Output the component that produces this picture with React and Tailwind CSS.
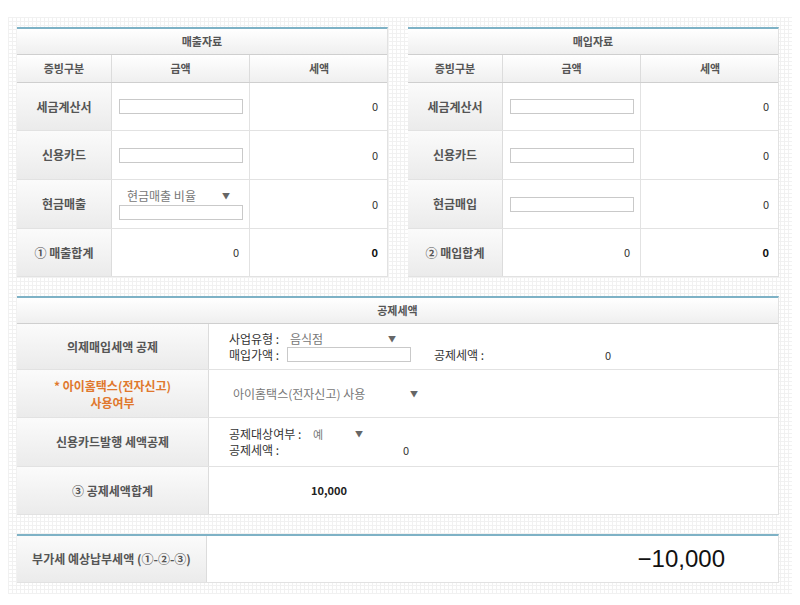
import React from 'react'

const font = { fontFamily: '"Noto Sans CJK KR", "Noto Sans", sans-serif' }

const gridBg =
  'bg-white bg-[linear-gradient(#f1f1f1_1px,transparent_1px),linear-gradient(90deg,#f1f1f1_1px,transparent_1px)] bg-[size:4px_4px]'

const labelCell =
  'flex items-center justify-center bg-gradient-to-b from-[#fbfbfb] to-[#ebebeb] text-[12px] font-bold text-[#555] border-r border-[#dcdcdc]'

const boxTop = 'border-t-2 border-r border-t-[#7eb2c6] border-r-[#e2e2e2] bg-white'

function Arrow({ className = '' }) {
  return <span className={`text-[8px] text-[#666] ${className}`}>▼</span>
}

function Input({ className = '' }) {
  return <div className={`h-[15px] border border-[#c9c9c9] bg-white ${className}`} />
}

function DataTable({ title, rows, total }) {
  return (
    <div className={`w-[371px] ${boxTop}`}>
      <div className="flex h-[26px] items-center justify-center border-b border-[#cfcfcf] bg-gradient-to-b from-white to-[#efefef] text-[11px] font-bold text-[#555]">
        {title}
      </div>
      <div className="grid h-[28px] grid-cols-[95px_138px_138px] border-b border-[#cfcfcf] bg-gradient-to-b from-white to-[#efefef] text-[11px] font-bold text-[#555]">
        <div className="flex items-center justify-center border-r border-[#dcdcdc]">증빙구분</div>
        <div className="flex items-center justify-center border-r border-[#dcdcdc]">금액</div>
        <div className="flex items-center justify-center">세액</div>
      </div>
      {rows.map((r, i) => (
        <div key={i} className={`grid grid-cols-[95px_138px_138px] border-b border-[#e2e2e2] ${i === 0 ? 'h-[48px]' : 'h-[49px]'}`}>
          <div className={labelCell}>{r.label}</div>
          <div className="flex flex-col justify-center border-r border-[#e2e2e2] px-[7px]">
            {r.select && (
              <div className="mb-[2px] flex items-center justify-between pl-[8px] pr-[12px] text-[12px] leading-[14px] text-[#777]">
                <span>{r.select}</span>
                <Arrow />
              </div>
            )}
            <Input className="w-[124px]" />
          </div>
          <div className="flex items-center justify-end pr-[10px] text-[11px] text-[#333]">0</div>
        </div>
      ))}
      <div className="grid h-[48px] grid-cols-[95px_138px_138px] border-b border-[#e2e2e2]">
        <div className={labelCell}>{total}</div>
        <div className="flex items-center justify-end border-r border-[#e2e2e2] pr-[10px] text-[11px] text-[#333]">0</div>
        <div className="flex items-center justify-end pr-[10px] text-[11px] font-bold text-[#111]">0</div>
      </div>
    </div>
  )
}

export default function App() {
  return (
    <div className="h-[605px] w-[800px] bg-white pt-[17px]" style={font}>
      <div className={`mx-[8px] h-[577px] px-[9px] pt-[10px] ${gridBg}`}>
        <div className="flex gap-[20px]">
          <DataTable
            title="매출자료"
            rows={[{ label: '세금계산서' }, { label: '신용카드' }, { label: '현금매출', select: '현금매출 비율' }]}
            total="① 매출합계"
          />
          <DataTable
            title="매입자료"
            rows={[{ label: '세금계산서' }, { label: '신용카드' }, { label: '현금매입' }]}
            total="② 매입합계"
          />
        </div>

        <div className={`mt-[19px] w-[762px] ${boxTop}`}>
          <div className="flex h-[26px] items-center justify-center border-b border-[#cfcfcf] bg-gradient-to-b from-white to-[#efefef] text-[11px] font-bold text-[#555]">
            공제세액
          </div>
          <div className="grid h-[46px] grid-cols-[192px_1fr] border-b border-[#e2e2e2]">
            <div className={labelCell}>의제매입세액 공제</div>
            <div className="flex flex-col justify-center pl-[20px] text-[12px] leading-[16px] text-[#333]">
              <div className="flex items-center">
                <span className="w-[61px]">사업유형 :</span>
                <span className="w-[98px] text-[#777]">음식점</span>
                <Arrow />
              </div>
              <div className="flex items-center">
                <span className="w-[58px]">매입가액 :</span>
                <Input className="w-[124px]" />
                <span className="ml-[23px] w-[171px]">공제세액 :</span>
                <span className="text-[11px]">0</span>
              </div>
            </div>
          </div>
          <div className="grid h-[48px] grid-cols-[192px_1fr] border-b border-[#e2e2e2]">
            <div className={`${labelCell} flex-col !text-[#e0782d] leading-[17px]`}>
              <span>* 아이홈택스(전자신고)</span>
              <span>사용여부</span>
            </div>
            <div className="flex items-center pl-[24px] text-[12px] text-[#777]">
              <span className="w-[177px]">아이홈택스(전자신고) 사용</span>
              <Arrow />
            </div>
          </div>
          <div className="grid h-[49px] grid-cols-[192px_1fr] border-b border-[#e2e2e2]">
            <div className={labelCell}>신용카드발행 세액공제</div>
            <div className="flex flex-col justify-center pl-[20px] text-[12px] leading-[16px] text-[#333]">
              <div className="flex items-center">
                <span className="w-[84px]">공제대상여부 :</span>
                <span className="w-[42px] text-[11px] text-[#777]">예</span>
                <Arrow />
              </div>
              <div className="flex items-center">
                <span className="w-[174px]">공제세액 :</span>
                <span className="text-[11px]">0</span>
              </div>
            </div>
          </div>
          <div className="grid h-[48px] grid-cols-[192px_1fr] border-b border-[#e2e2e2]">
            <div className={labelCell}>③ 공제세액합계</div>
            <div className="flex items-center pl-[102px] text-[11px] font-bold text-[#222]">10,000</div>
          </div>
        </div>

        <div className={`mt-[19px] grid h-[49px] w-[762px] grid-cols-[190px_1fr] border-b border-b-[#e2e2e2] ${boxTop}`}>
          <div className={labelCell}>부가세 예상납부세액 (①-②-③)</div>
          <div
            className="flex items-center justify-end pr-[53px] text-[24px] text-[#111]"
            style={{ fontFamily: '"Liberation Sans", sans-serif' }}
          >
            −10,000
          </div>
        </div>
      </div>
    </div>
  )
}
